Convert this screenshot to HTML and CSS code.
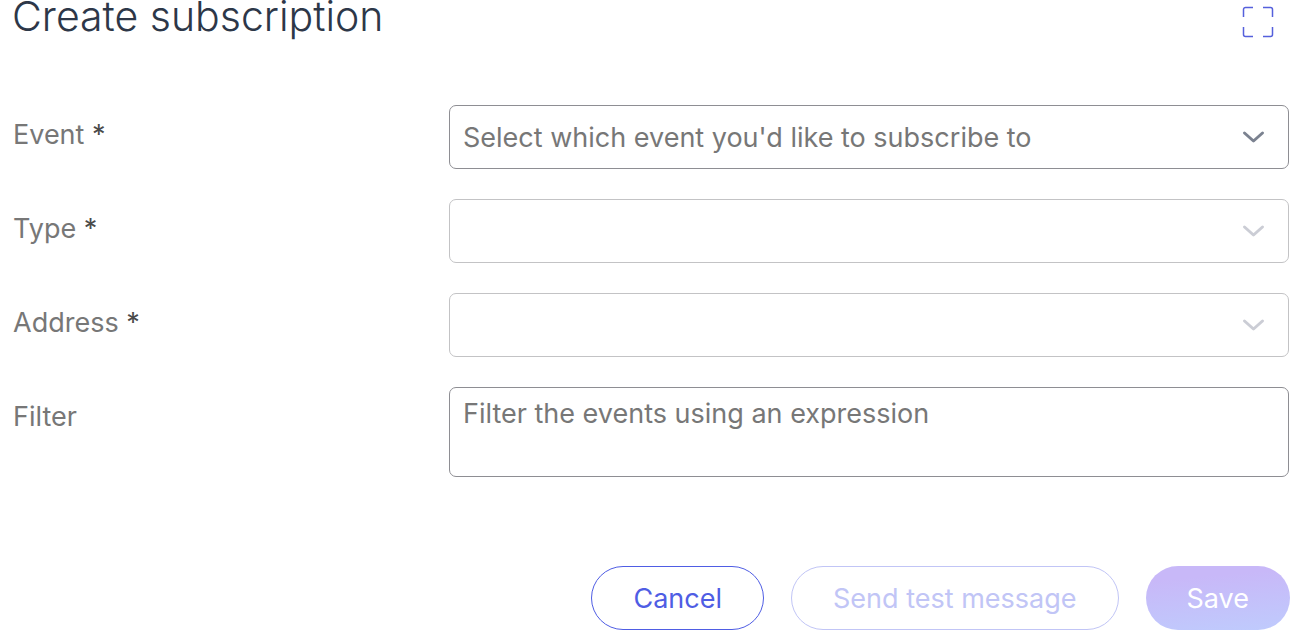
FILE: index.html
```html
<!DOCTYPE html>
<html lang="en">
<head>
  <meta charset="UTF-8">
  <title>Create subscription</title>
  <link rel="stylesheet" href="styles.css">
</head>
<body>

<form class="subscription-form">
  <!-- Header -->
  <header class="header">
    <h1>Create subscription</h1>
    <button type="button" class="expand-button" aria-label="Full screen">
      <svg viewBox="0 0 32 32" width="32" height="32">
        <path d="M1.500 11V3.500a2 2 0 0 1 2-2H11M21 1.500h7.500a2 2 0 0 1 2 2V11M30.500 21v7.500a2 2 0 0 1-2 2H21M11 30.500H3.500a2 2 0 0 1-2-2V21"/>
      </svg>
    </button>
  </header>

  <!-- Fields -->
  <div class="fields">
    <div class="field">
      <label for="event">Event <span class="required">*</span></label>
      <div class="select-box">
        <select id="event" required>
          <option value="">Select which event you'd like to subscribe to</option>
        </select>
        <svg class="chevron" viewBox="0 0 24 14" width="24" height="14"><path d="M3.500 3l9 8 9-8"/></svg>
      </div>
    </div>
    <div class="field">
      <label for="type">Type <span class="required">*</span></label>
      <div class="select-box disabled">
        <select id="type" required disabled></select>
        <svg class="chevron" viewBox="0 0 24 14" width="24" height="14"><path d="M3.500 3l9 8 9-8"/></svg>
      </div>
    </div>
    <div class="field">
      <label for="address">Address <span class="required">*</span></label>
      <div class="select-box disabled">
        <select id="address" required disabled></select>
        <svg class="chevron" viewBox="0 0 24 14" width="24" height="14"><path d="M3.500 3l9 8 9-8"/></svg>
      </div>
    </div>
    <div class="field">
      <label for="filter">Filter</label>
      <textarea id="filter" placeholder="Filter the events using an expression"></textarea>
    </div>
  </div>

  <!-- Actions -->
  <div class="actions">
    <button type="button" class="button">Cancel</button>
    <button type="button" class="button" disabled>Send test message</button>
    <button type="submit" class="button primary" disabled>Save</button>
  </div>
</form>

</body>
</html>
```
FILE: styles.css
```css
* {
  box-sizing: border-box;
}
body {
  margin: 0;
  background-color: #fff;
  color: #777;
  font-family: Inter, sans-serif;
  font-size: 27px;
}
.subscription-form {
  padding: 0 10px 10px 12px;
}
.header {
  display: flex;
  justify-content: space-between;
  height: 105px;
  padding-right: 16px;
}
.header h1 {
  margin: 0;
  color: #2d3748;
  font-size: 41px;
  font-weight: 300;
  line-height: 32px;
}
.expand-button {
  width: 32px;
  height: 32px;
  margin-top: 6px;
  padding: 0;
  border: 0;
  background: none;
}
.expand-button svg {
  display: block;
  fill: none;
  stroke: #5560dc;
  stroke-width: 1.500;
}

/* Fields */
.fields {
  display: grid;
  gap: 30px;
  padding: 0 1px;
}
.field {
  display: grid;
  grid-template-columns: 436px 1fr;
}
.field label {
  padding-top: 13px;
  line-height: 34px;
}
.required {
  color: #4a4a4a;
}
.select-box {
  display: grid;
  align-items: center;
}
.select-box select,
.select-box .chevron {
  grid-area: 1 / 1;
}
.select-box select,
.field textarea {
  width: 100%;
  margin: 0;
  border: 1px solid #8e8e93;
  border-radius: 7px;
  background-color: #fff;
  color: #777;
  font: inherit;
}
.select-box select {
  height: 64px;
  padding: 0 60px 0 13px;
  appearance: none;
}
.chevron {
  justify-self: end;
  margin-right: 24px;
  fill: none;
  stroke: #7b8290;
  stroke-width: 3;
  stroke-linecap: round;
  stroke-linejoin: round;
  pointer-events: none;
}
.disabled select {
  border-color: #c3c3c5;
  opacity: 1;
}
.disabled .chevron {
  stroke: #cbcdd5;
}
.field textarea {
  display: block;
  height: 90px;
  padding: 9px 13px;
  line-height: 34px;
  resize: none;
}
.field textarea::placeholder {
  color: #777;
}

/* Actions */
.actions {
  display: flex;
  justify-content: flex-end;
  gap: 27px;
  margin-top: 89px;
}
.button {
  height: 64px;
  padding: 0 41px;
  border: 1px solid #4f5de4;
  border-radius: 32px;
  background: #fff;
  color: #4f5de4;
  font: inherit;
}
.button:disabled {
  border-color: #c1c5f6;
  color: #c1c5f6;
}
.button.primary {
  border: 0;
  background: linear-gradient(175deg, #c8b8f8 20%, #bfcbfd);
  color: #fff;
}
```
